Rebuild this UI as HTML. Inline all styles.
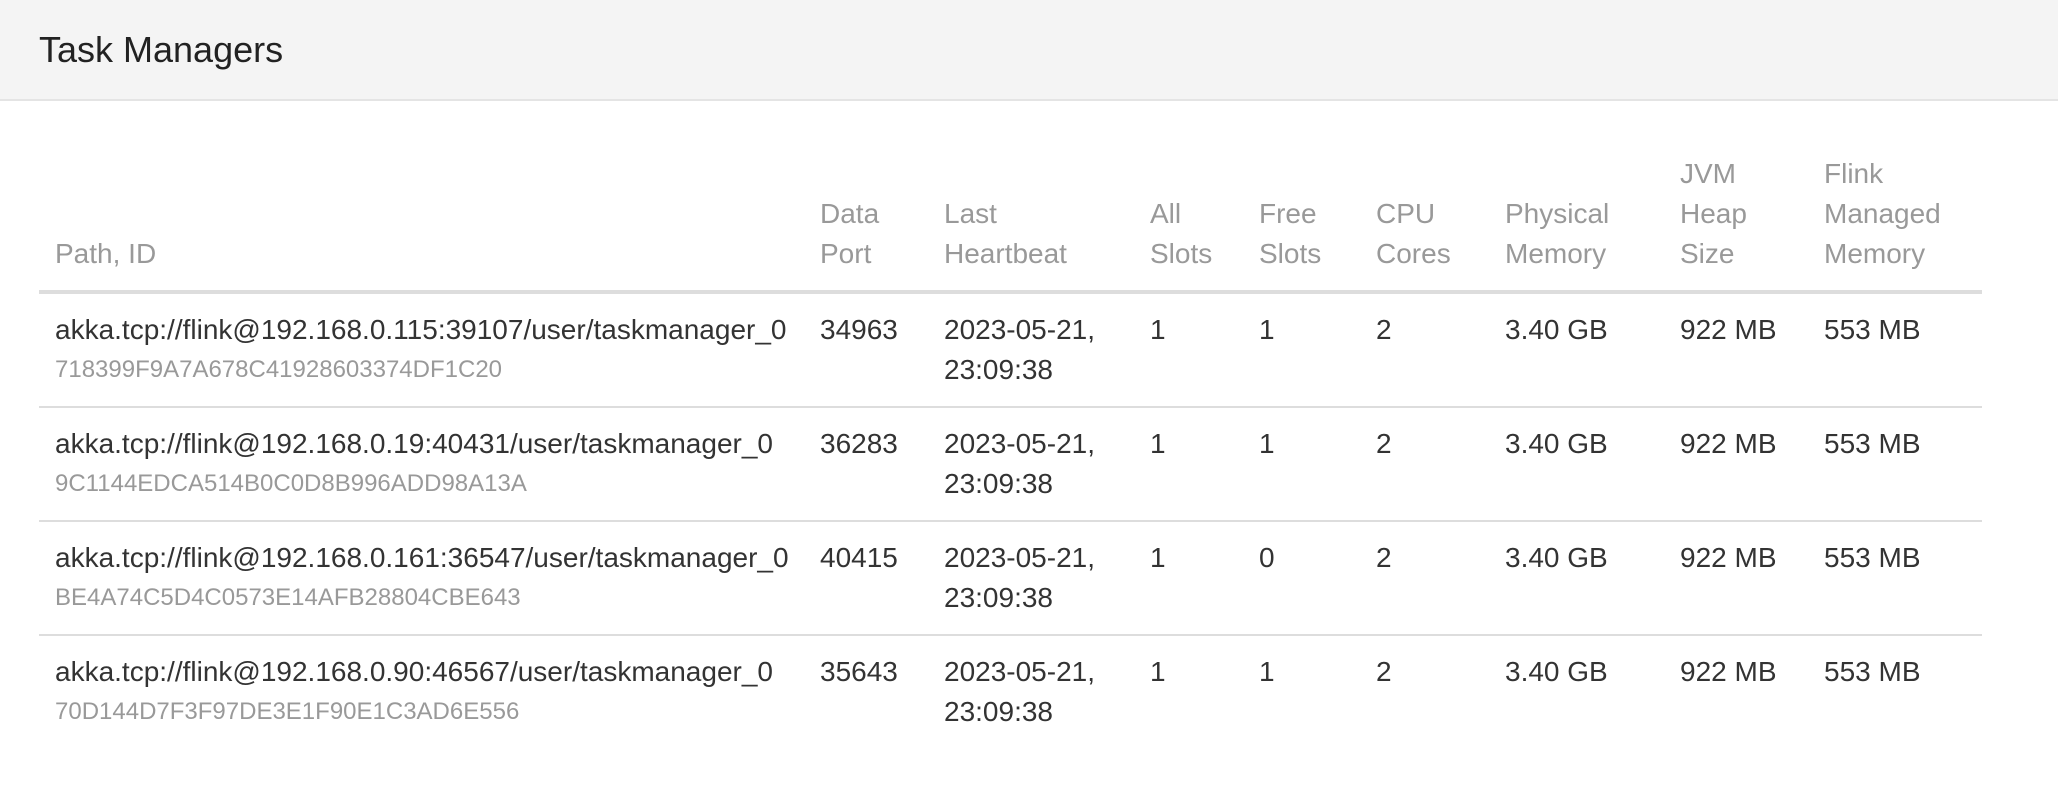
<!DOCTYPE html>
<html><head><meta charset="utf-8"><style>
html,body{margin:0;padding:0;background:#fff;width:2058px;height:802px;overflow:hidden;font-family:"Liberation Sans",Arial,sans-serif;}
.hd{height:99px;background:#f4f4f4;border-bottom:2px solid #e4e4e4;position:relative;}
.hd h1{margin:0;position:absolute;left:39px;top:28px;font-size:36px;font-weight:normal;color:#222;line-height:44px;}
table{position:absolute;left:39px;top:154px;border-collapse:collapse;table-layout:fixed;width:1943px;}
th,td{padding:0 0 0 16px;text-align:left;font-size:28px;line-height:40px;}
th{color:#999;font-weight:normal;vertical-align:bottom;padding-bottom:16px;}
thead tr{border-bottom:4px solid #ddd;}
td{color:#333;vertical-align:top;padding-top:16px;padding-bottom:16px;}
tbody tr{border-bottom:2px solid #ddd;}
tbody tr:last-child{border-bottom:none;}
.id{display:block;color:#999;font-size:24px;line-height:40px;height:40px;}
</style></head><body>
<div class="hd"><h1>Task Managers</h1></div>
<table>
<colgroup><col style="width:765px"><col style="width:124px"><col style="width:206px"><col style="width:109px"><col style="width:117px"><col style="width:129px"><col style="width:175px"><col style="width:144px"><col style="width:174px"></colgroup>
<thead><tr><th>Path, ID</th><th>Data<br>Port</th><th>Last<br>Heartbeat</th><th>All<br>Slots</th><th>Free<br>Slots</th><th>CPU<br>Cores</th><th>Physical<br>Memory</th><th>JVM<br>Heap<br>Size</th><th>Flink<br>Managed<br>Memory</th></tr></thead>
<tbody>
<tr><td>akka.tcp://flink@192.168.0.115:39107/user/taskmanager_0<span class="id">718399F9A7A678C41928603374DF1C20</span></td><td>34963</td><td>2023-05-21,<br>23:09:38</td><td>1</td><td>1</td><td>2</td><td>3.40 GB</td><td>922 MB</td><td>553 MB</td></tr>
<tr><td>akka.tcp://flink@192.168.0.19:40431/user/taskmanager_0<span class="id">9C1144EDCA514B0C0D8B996ADD98A13A</span></td><td>36283</td><td>2023-05-21,<br>23:09:38</td><td>1</td><td>1</td><td>2</td><td>3.40 GB</td><td>922 MB</td><td>553 MB</td></tr>
<tr><td>akka.tcp://flink@192.168.0.161:36547/user/taskmanager_0<span class="id">BE4A74C5D4C0573E14AFB28804CBE643</span></td><td>40415</td><td>2023-05-21,<br>23:09:38</td><td>1</td><td>0</td><td>2</td><td>3.40 GB</td><td>922 MB</td><td>553 MB</td></tr>
<tr><td>akka.tcp://flink@192.168.0.90:46567/user/taskmanager_0<span class="id">70D144D7F3F97DE3E1F90E1C3AD6E556</span></td><td>35643</td><td>2023-05-21,<br>23:09:38</td><td>1</td><td>1</td><td>2</td><td>3.40 GB</td><td>922 MB</td><td>553 MB</td></tr>
</tbody></table>
</body></html>
